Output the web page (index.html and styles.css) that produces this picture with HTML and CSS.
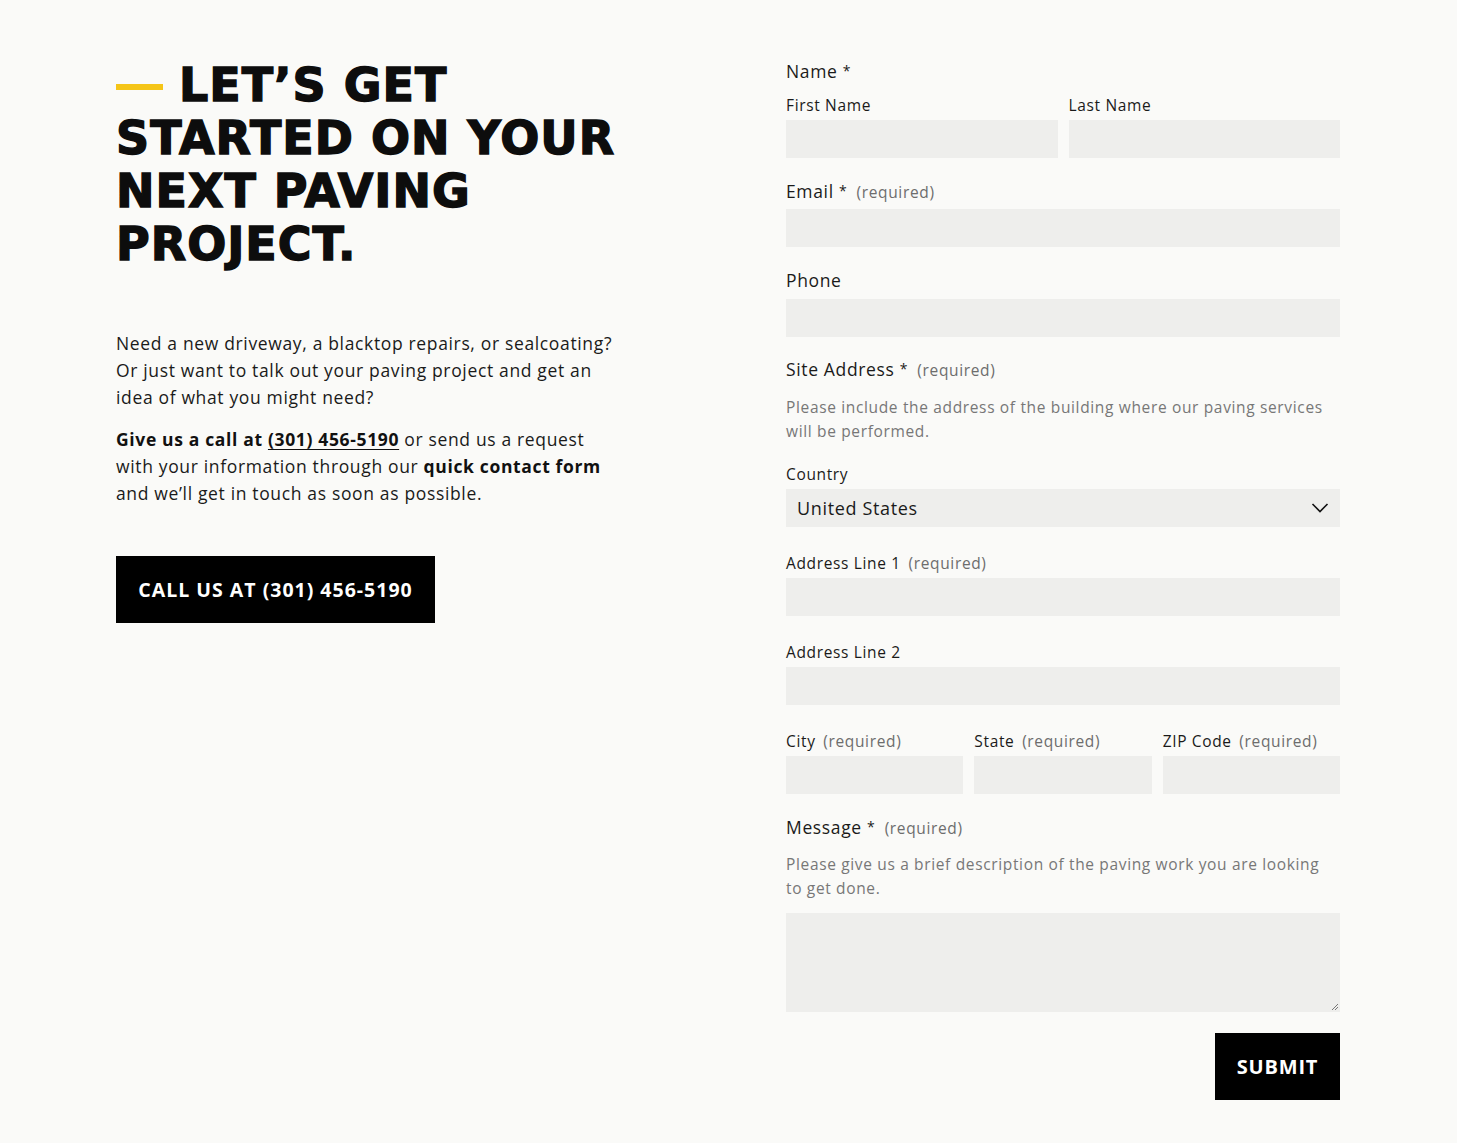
FILE: index.html
```html
<!DOCTYPE html>
<html lang="en">
<head>
<meta charset="utf-8">
<title>Contact</title>
<link rel="stylesheet" href="styles.css">
</head>
<body>
<main class="page">
  <section class="intro">
    <h1 class="title"><span class="dash"></span>LET’S GET STARTED ON YOUR NEXT PAVING PROJECT.</h1>
    <p class="copy">Need a new driveway, a blacktop repairs, or sealcoating? Or just want to talk out your paving project and get an idea of what you might need?</p>
    <p class="copy"><strong>Give us a call at <a class="tel" href="#">(301) 456-5190</a></strong> or send us a request with your information through our <strong>quick contact form</strong> and we’ll get in touch as soon as possible.</p>
    <a class="btn btn-call" href="#">CALL US AT (301) 456-5190</a>
  </section>

  <form class="form">
    <div class="field">
      <div class="label name-label">Name <span class="ast">*</span></div>
      <div class="row two">
        <div class="sub">
          <div class="sublabel">First Name</div>
          <div class="input"></div>
        </div>
        <div class="sub">
          <div class="sublabel">Last Name</div>
          <div class="input"></div>
        </div>
      </div>
    </div>

    <div class="field">
      <div class="label">Email <span class="ast">*</span> <span class="req">(required)</span></div>
      <div class="input"></div>
    </div>

    <div class="field field-phone">
      <div class="label phone-label">Phone</div>
      <div class="input"></div>
    </div>

    <div class="field">
      <div class="label">Site Address <span class="ast">*</span> <span class="req">(required)</span></div>
      <p class="desc">Please include the address of the building where our paving services will be performed.</p>
      <div class="sub">
        <div class="sublabel">Country</div>
        <div class="input select"><span>United States</span>
          <svg class="chev" width="18" height="12" viewBox="0 0 18 12"><path d="M1.5 2 L9 9.5 L16.5 2" fill="none" stroke="#111" stroke-width="1.6"/></svg>
        </div>
      </div>
      <div class="sub gap">
        <div class="sublabel">Address Line 1 <span class="req">(required)</span></div>
        <div class="input"></div>
      </div>
      <div class="sub gap">
        <div class="sublabel">Address Line 2</div>
        <div class="input"></div>
      </div>
      <div class="row three gap">
        <div class="sub">
          <div class="sublabel">City <span class="req">(required)</span></div>
          <div class="input"></div>
        </div>
        <div class="sub">
          <div class="sublabel">State <span class="req">(required)</span></div>
          <div class="input"></div>
        </div>
        <div class="sub">
          <div class="sublabel">ZIP Code <span class="req">(required)</span></div>
          <div class="input"></div>
        </div>
      </div>
    </div>

    <div class="field">
      <div class="label">Message <span class="ast">*</span> <span class="req">(required)</span></div>
      <p class="desc desc-msg">Please give us a brief description of the paving work you are looking to get done.</p>
      <div class="input textarea">
        <svg class="grip" width="8" height="8" viewBox="0 0 8 8"><path d="M7 1 L1 7 M7 4 L4 7" stroke="#777" stroke-width="1"/></svg>
      </div>
    </div>

    <div class="actions">
      <button class="btn btn-submit" type="button">SUBMIT</button>
    </div>
  </form>
</main>
</body>
</html>
```

FILE: styles.css
```css
* { box-sizing: border-box; }
html, body { margin: 0; padding: 0; }
body {
  background: #fafaf8;
  color: #111;
  font-family: "Open Sans", "Liberation Sans", sans-serif;
  letter-spacing: 0.65px;
  width: 1457px;
  min-height: 1143px;
}
.page {
  display: flex;
  padding: 59px 0 0 116px;
}
.intro {
  width: 510px;
  flex: none;
}
.title {
  margin: 0;
  font-family: "DejaVu Sans", "Liberation Sans", sans-serif;
  font-weight: 700;
  font-size: 46px;
  line-height: 53px;
  letter-spacing: 1px;
  color: #0d0d0d;
  -webkit-text-stroke: 1.4px #0d0d0d;
}
.dash {
  display: inline-block;
  width: 47px;
  height: 6px;
  background: #f5c518;
  vertical-align: middle;
  margin: 0 16px 4px 0;
}
.copy {
  margin: 0 0 15px;
  font-size: 17.5px;
  line-height: 27px;
  color: #1a1a1a;
}
.title + .copy { margin-top: 59px; }
.copy strong { font-weight: 700; color: #111; }
.tel { color: #111; text-decoration: underline; text-underline-offset: 3px; }
.btn {
  display: inline-flex;
  align-items: center;
  justify-content: center;
  background: #000;
  color: #fff;
  font-family: "Open Sans", "Liberation Sans", sans-serif;
  font-weight: 700;
  text-decoration: none;
  border: 0;
}
.btn-call {
  margin-top: 34px;
  width: 319px;
  height: 67px;
  font-size: 19.5px;
  letter-spacing: 1px;
}
.form {
  margin-left: 160px;
  width: 554px;
  display: flex;
  flex-direction: column;
}
.field { margin-bottom: 21px; }
.field-phone { margin-bottom: 20px; }
.label {
  font-size: 17.5px;
  line-height: 24px;
  margin-bottom: 5px;
  color: #1a1a1a;
}
.name-label { margin-bottom: 12px; }
.phone-label { margin-bottom: 7px; }
.ast { font-size: 14px; vertical-align: 2px; }
.req {
  font-size: 15.5px;
  color: #6d6d6d;
  margin-left: 4px;
}
.sublabel {
  font-size: 15.5px;
  line-height: 20px;
  margin-bottom: 5px;
  color: #1a1a1a;
}
.sublabel .req { margin-left: 3px; }
.row { display: grid; gap: 11px; }
.row.two { grid-template-columns: 1fr 1fr; }
.row.three { grid-template-columns: 1fr 1fr 1fr; }
.gap { margin-top: 26px; }
.input {
  height: 38px;
  background: #eeeeec;
}
.select {
  display: flex;
  align-items: center;
  justify-content: space-between;
  padding: 0 11px;
  font-size: 18px;
  color: #1a1a1a;
}
.desc {
  margin: 13px 0 21px;
  font-size: 15.5px;
  line-height: 24px;
  color: #777;
}
.desc.desc-msg { margin: 12px 0 13px; }
.textarea {
  height: 99px;
  position: relative;
}
.grip { position: absolute; right: 1px; bottom: 1px; }
.actions {
  display: flex;
  justify-content: flex-end;
}
.btn-submit {
  width: 125px;
  height: 67px;
  font-size: 20px;
  letter-spacing: 0.8px;
}
```
